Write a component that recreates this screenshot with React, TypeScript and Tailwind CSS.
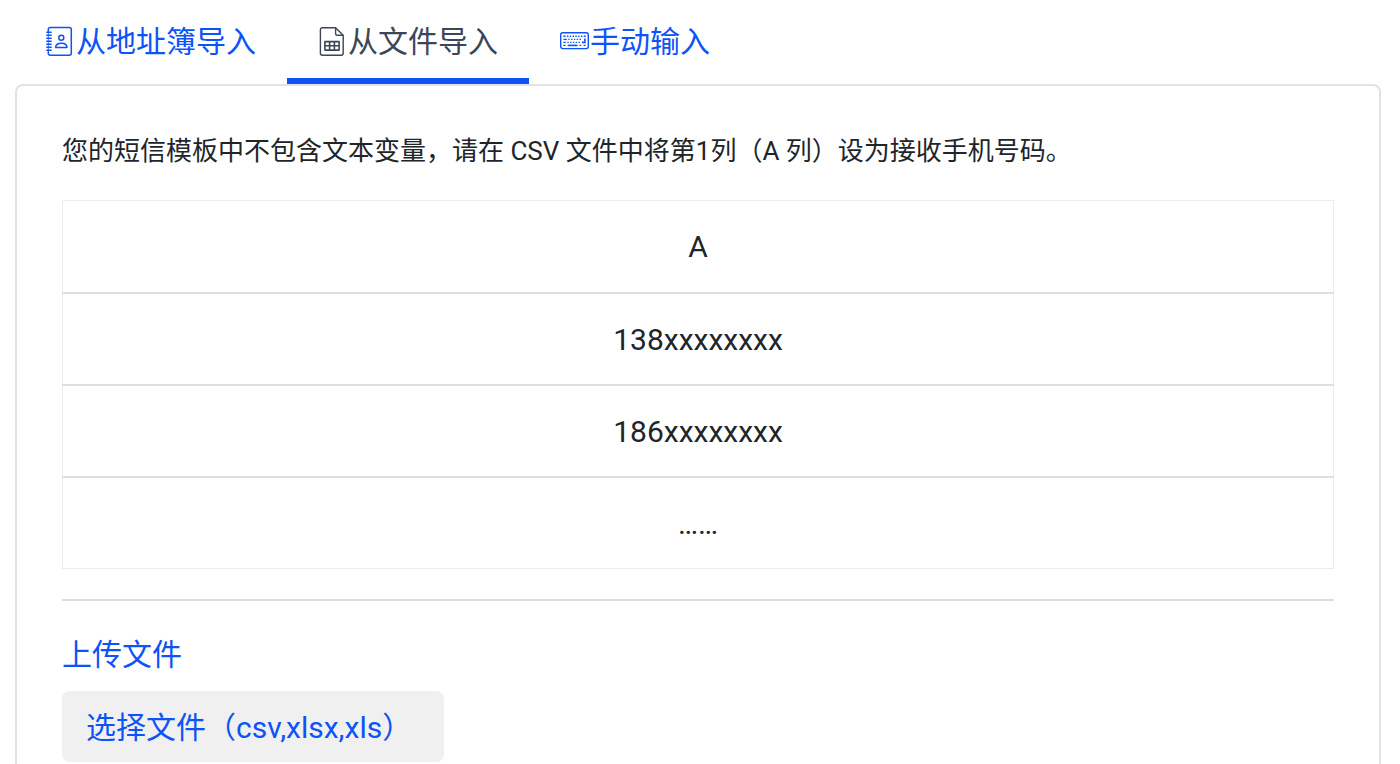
import { useRef, useState } from "react";

type TabKey = "book" | "file" | "manual";

const AddressBookIcon = () => (
  <svg viewBox="0 0 30 30" className="size-[30px] shrink-0" fill="none" stroke="currentColor" strokeWidth="1.5" strokeLinecap="round" aria-hidden="true">
    <path d="M2.3 5V3.6a2 2 0 0 1 2-2h19a2 2 0 0 1 2 2v23.6a2 2 0 0 1-2 2h-19a2 2 0 0 1-2-2V26" />
    <path d="M2.3 5v21" strokeWidth="0.8" />
    <path d="M.8 6.2h4.4M.8 9.2h4.4M.8 12.2h4.4M.8 15.2h4.4M.8 18.2h4.4M.8 21.2h4.4M.8 24.2h4.4" strokeWidth="1.4" />
    <circle cx="15.3" cy="11.8" r="2.5" />
    <path d="M9.6 21.6h11.4c0-2.6-2.3-4.4-5.7-4.4s-5.7 1.8-5.7 4.4z" strokeLinejoin="round" />
  </svg>
);

const SheetIcon = () => (
  <svg viewBox="0 0 30 30" className="size-[30px] shrink-0" fill="none" stroke="currentColor" strokeWidth="1.4" strokeLinejoin="round" aria-hidden="true">
    <path d="M4.4 1.7h13.2l7.6 7.6v17.9a2 2 0 0 1-2 2H4.4a2 2 0 0 1-2-2V3.7a2 2 0 0 1 2-2z" />
    <path d="M17.6 1.7v6.1a1.5 1.5 0 0 0 1.5 1.5h6.1" />
    <path d="M6.9 15.6h14.2v8.5H6.9zM6.9 19.8h14.2M11.6 15.6v8.5M16.4 15.6v8.5" strokeWidth="1.6" />
  </svg>
);

const KeyboardIcon = () => (
  <svg viewBox="0 0 30 30" className="size-[30px] shrink-0" fill="none" stroke="currentColor" aria-hidden="true">
    <rect x="0.7" y="6.8" width="27.6" height="15.8" rx="2" strokeWidth="1.4" />
    <path d="M3.4 10.3h2.2M7 10.3h1.4M9.8 10.3h1.4M12.6 10.3h1.4M15.4 10.3h1.4M18.2 10.3h1.4M21 10.3h1.4M23.8 10.3h2" strokeWidth="1.4" />
    <path d="M3.4 13.4h3.4M8.3 13.4h1.4M11.1 13.4h1.4M13.9 13.4h1.4M16.7 13.4h1.4M19.5 13.4h1.4M3.4 16.3h2.4M7.3 16.3h1.4M10.1 16.3h1.4M12.9 16.3h1.4M15.7 16.3h1.4M18.5 16.3h1.4M3.4 19.3h2.2M19.5 19.3h1.8M23.6 19.3h2" strokeWidth="1.3" />
    <path d="M7.6 19.4h10" strokeWidth="1.6" />
    <path d="M24.9 12.6v3.8h-2.9" strokeWidth="1.6" />
  </svg>
);

const tabs = [
  { key: "book" as TabKey, label: "从地址簿导入", Icon: AddressBookIcon },
  { key: "file" as TabKey, label: "从文件导入", Icon: SheetIcon },
  { key: "manual" as TabKey, label: "手动输入", Icon: KeyboardIcon },
];

const rows = ["138xxxxxxxx", "186xxxxxxxx", "……"];

export default function App() {
  const [active, setActive] = useState<TabKey>("file");
  const fileRef = useRef<HTMLInputElement>(null);

  return (
    <div className="flex h-screen flex-col overflow-hidden bg-white pl-[15px] pr-[19px] font-[Roboto,'Noto_Sans_CJK_SC',sans-serif] text-[30px] leading-[44px] text-[#212529]">
      {/* Tabs */}
      <div role="tablist" className="flex shrink-0">
        {tabs.map(({ key, label, Icon }) => (
          <button
            key={key}
            type="button"
            role="tab"
            aria-selected={active === key}
            onClick={() => setActive(key)}
            className={`flex h-[84px] cursor-pointer items-center whitespace-nowrap border-b-6 px-[31px] pt-1 ${
              active === key ? "border-[#0d53f5] text-[#3d4656]" : "border-transparent text-[#0d53f5]"
            }`}
          >
            <Icon />
            <span className="pt-0.5">{label}</span>
          </button>
        ))}
      </div>

      {/* Panel */}
      <div role="tabpanel" className="flex-1 rounded-t-lg border-2 border-b-0 border-[#e2e2e4] px-[45px] pt-[45px]">
        <p className="mb-[29px] text-[26px] leading-10">
          您的短信模板中不包含文本变量，请在 CSV 文件中将第1列（A 列）设为接收手机号码。
        </p>

        <table className="w-full border-collapse border border-[#ececec] text-center">
          <thead>
            <tr className="h-[92px] border-b-2 border-[#e0e0e0]">
              <th scope="col" className="pt-0.5 font-normal">A</th>
            </tr>
          </thead>
          <tbody>
            {rows.map((row) => (
              <tr key={row} className="h-[92px] border-b-2 border-[#e0e0e0] last:border-b last:border-[#ececec]">
                <td className="pt-0.5">{row}</td>
              </tr>
            ))}
          </tbody>
        </table>

        <hr className="mb-8 mt-[30px] border-t-2 border-[#dedede]" />

        {/* Upload */}
        <div className="flex flex-col items-start gap-3.5 text-[#0d53f5]">
          <label htmlFor="contacts-file">上传文件</label>
          <input ref={fileRef} id="contacts-file" type="file" accept=".csv,.xlsx,.xls" className="hidden" />
          <button
            type="button"
            onClick={() => fileRef.current?.click()}
            className="h-[71px] cursor-pointer whitespace-nowrap rounded-lg bg-[#f0f0f0] pl-6 pr-8 pt-0.5"
          >
            选择文件（csv,xlsx,xls）
          </button>
        </div>
      </div>
    </div>
  );
}
